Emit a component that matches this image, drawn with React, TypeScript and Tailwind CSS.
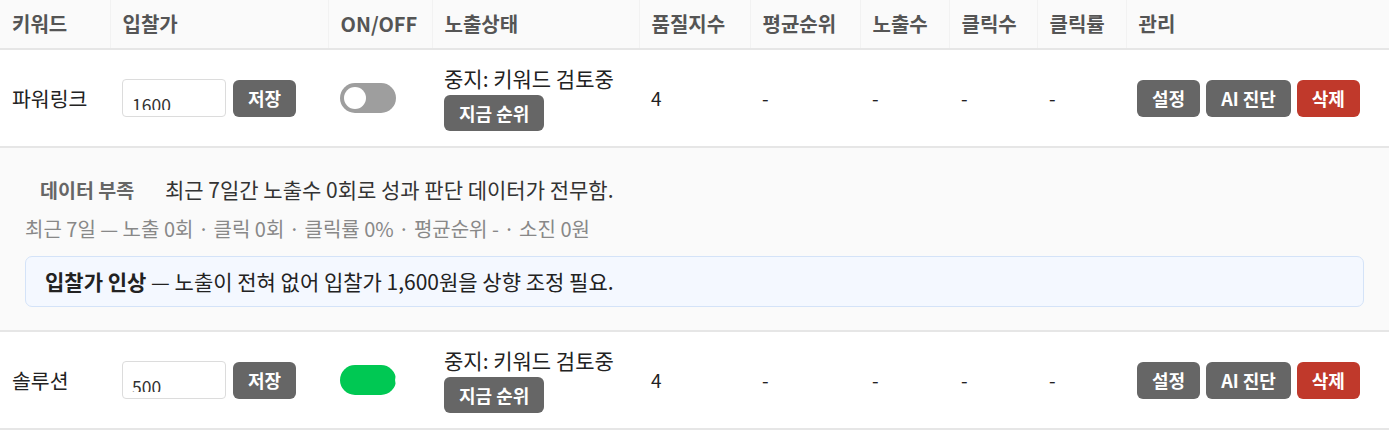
const font = { fontFamily: '"Noto Sans CJK KR", "Noto Sans", sans-serif' }

type Row = {
  keyword: string
  bid: string
  on: boolean
}

const rows: Row[] = [
  { keyword: '파워링크', bid: '1600', on: false },
  { keyword: '솔루션', bid: '500', on: true },
]

function Toggle({ on }: { on: boolean }) {
  return (
    <div
      className={
        'relative w-[56px] h-[30px] rounded-full overflow-hidden ' +
        (on ? 'bg-[#00c853]' : 'bg-[#9e9e9e]')
      }
    >
      <span
        className={
          'absolute top-[4px] w-[22px] h-[22px] rounded-full bg-white ' +
          (on ? 'left-[55px]' : 'left-[4px]')
        }
      />
    </div>
  )
}

function GrayButton({ children }: { children: React.ReactNode }) {
  return (
    <button className="h-[37px] px-[15px] rounded-[6px] bg-[#666666] text-white font-bold text-[18px] leading-none">
      {children}
    </button>
  )
}

function BidInput({ value }: { value: string }) {
  return (
    <div className="w-[104px] h-[38px] border border-[#dcdcdc] rounded-[4px] pl-[9px] pt-[14px] bg-white">
      <div className="h-[16px] overflow-hidden">
        <input
          readOnly
          value={value}
          className="block w-full h-[22px] p-0 bg-transparent text-[17.5px] leading-[22px] text-[#333] outline-none"
        />
      </div>
    </div>
  )
}

function KeywordRow({ row }: { row: Row }) {
  return (
    <tr className="border-b-2 border-[#e6e6e6] bg-white">
      <td className="pl-[12px] h-[98px] text-[20.5px] text-[#222]">{row.keyword}</td>
      <td className="pl-[12px]">
        <div className="flex items-center gap-[7px]">
          <BidInput value={row.bid} />
          <GrayButton>저장</GrayButton>
        </div>
      </td>
      <td className="pl-[12px]">
        <Toggle on={row.on} />
      </td>
      <td className="pl-[12px]">
        <div className="flex flex-col items-start gap-[4px]">
          <span className="text-[21px] text-[#222] leading-[26px]">중지: 키워드 검토중</span>
          <button className="h-[36px] px-[15px] rounded-[6px] bg-[#666666] text-white font-bold text-[18px] leading-none">
            지금 순위
          </button>
        </div>
      </td>
      <td className="pl-[12px] text-[19px] text-[#222]">4</td>
      <td className="pl-[12px] text-[19px] text-[#222]">-</td>
      <td className="pl-[12px] text-[19px] text-[#222]">-</td>
      <td className="pl-[12px] text-[19px] text-[#222]">-</td>
      <td className="pl-[12px] text-[19px] text-[#222]">-</td>
      <td className="pl-[11px]">
        <div className="flex items-center gap-[6px]">
          <GrayButton>설정</GrayButton>
          <GrayButton>AI 진단</GrayButton>
          <button className="h-[37px] px-[15px] rounded-[6px] bg-[#c0392b] text-white font-bold text-[18px] leading-none">
            삭제
          </button>
        </div>
      </td>
    </tr>
  )
}

function DetailRow() {
  return (
    <tr className="border-b-2 border-[#e6e6e6] bg-[#fafafa]">
      <td colSpan={10} className="px-[25px] pt-[28px] pb-[23px]">
        <div className="flex items-center h-[28px]">
          <span className="pl-[15px] w-[140px] text-[19.5px] font-bold text-[#666]">데이터 부족</span>
          <span className="text-[21px] text-[#333]">
            최근 7일간 노출수 0회로 성과 판단 데이터가 전무함.
          </span>
        </div>
        <div className="mt-[11px] h-[28px] leading-[28px] text-[20px] text-[#888]">
          최근 7일 — 노출 0회 · 클릭 0회 · 클릭률 0% · 평균순위 - · 소진 0원
        </div>
        <div className="mt-[13px] h-[51px] flex items-center px-[19px] rounded-[7px] border border-[#d4e3f8] bg-[#f4f8ff] text-[21px] text-[#222]">
          <b className="font-bold">입찰가 인상</b>
          <span>&nbsp;— 노출이 전혀 없어 입찰가 1,600원을 상향 조정 필요.</span>
        </div>
      </td>
    </tr>
  )
}

const headers = [
  { label: '키워드', w: 'w-[110px]' },
  { label: '입찰가', w: 'w-[218px]' },
  { label: 'ON/OFF', w: 'w-[104px]' },
  { label: '노출상태', w: 'w-[207px]' },
  { label: '품질지수', w: 'w-[111px]' },
  { label: '평균순위', w: 'w-[110px]' },
  { label: '노출수', w: 'w-[89px]' },
  { label: '클릭수', w: 'w-[88px]' },
  { label: '클릭률', w: 'w-[89px]' },
  { label: '관리', w: '' },
]

export default function App() {
  return (
    <div className="w-[1389px] h-[430px] overflow-hidden bg-white" style={font}>
      <table className="w-full table-fixed border-collapse">
        <thead>
          <tr className="bg-[#fafafa] border-b-2 border-[#e6e6e6]">
            {headers.map((h) => (
              <th
                key={h.label}
                className={
                  h.w +
                  ' h-[49px] pl-[12px] text-left text-[20px] font-bold text-[#555] border-r border-[#f2f2f2] last:border-r-0'
                }
              >
                {h.label}
              </th>
            ))}
          </tr>
        </thead>
        <tbody>
          <KeywordRow row={rows[0]} />
          <DetailRow />
          <KeywordRow row={rows[1]} />
        </tbody>
      </table>
    </div>
  )
}
